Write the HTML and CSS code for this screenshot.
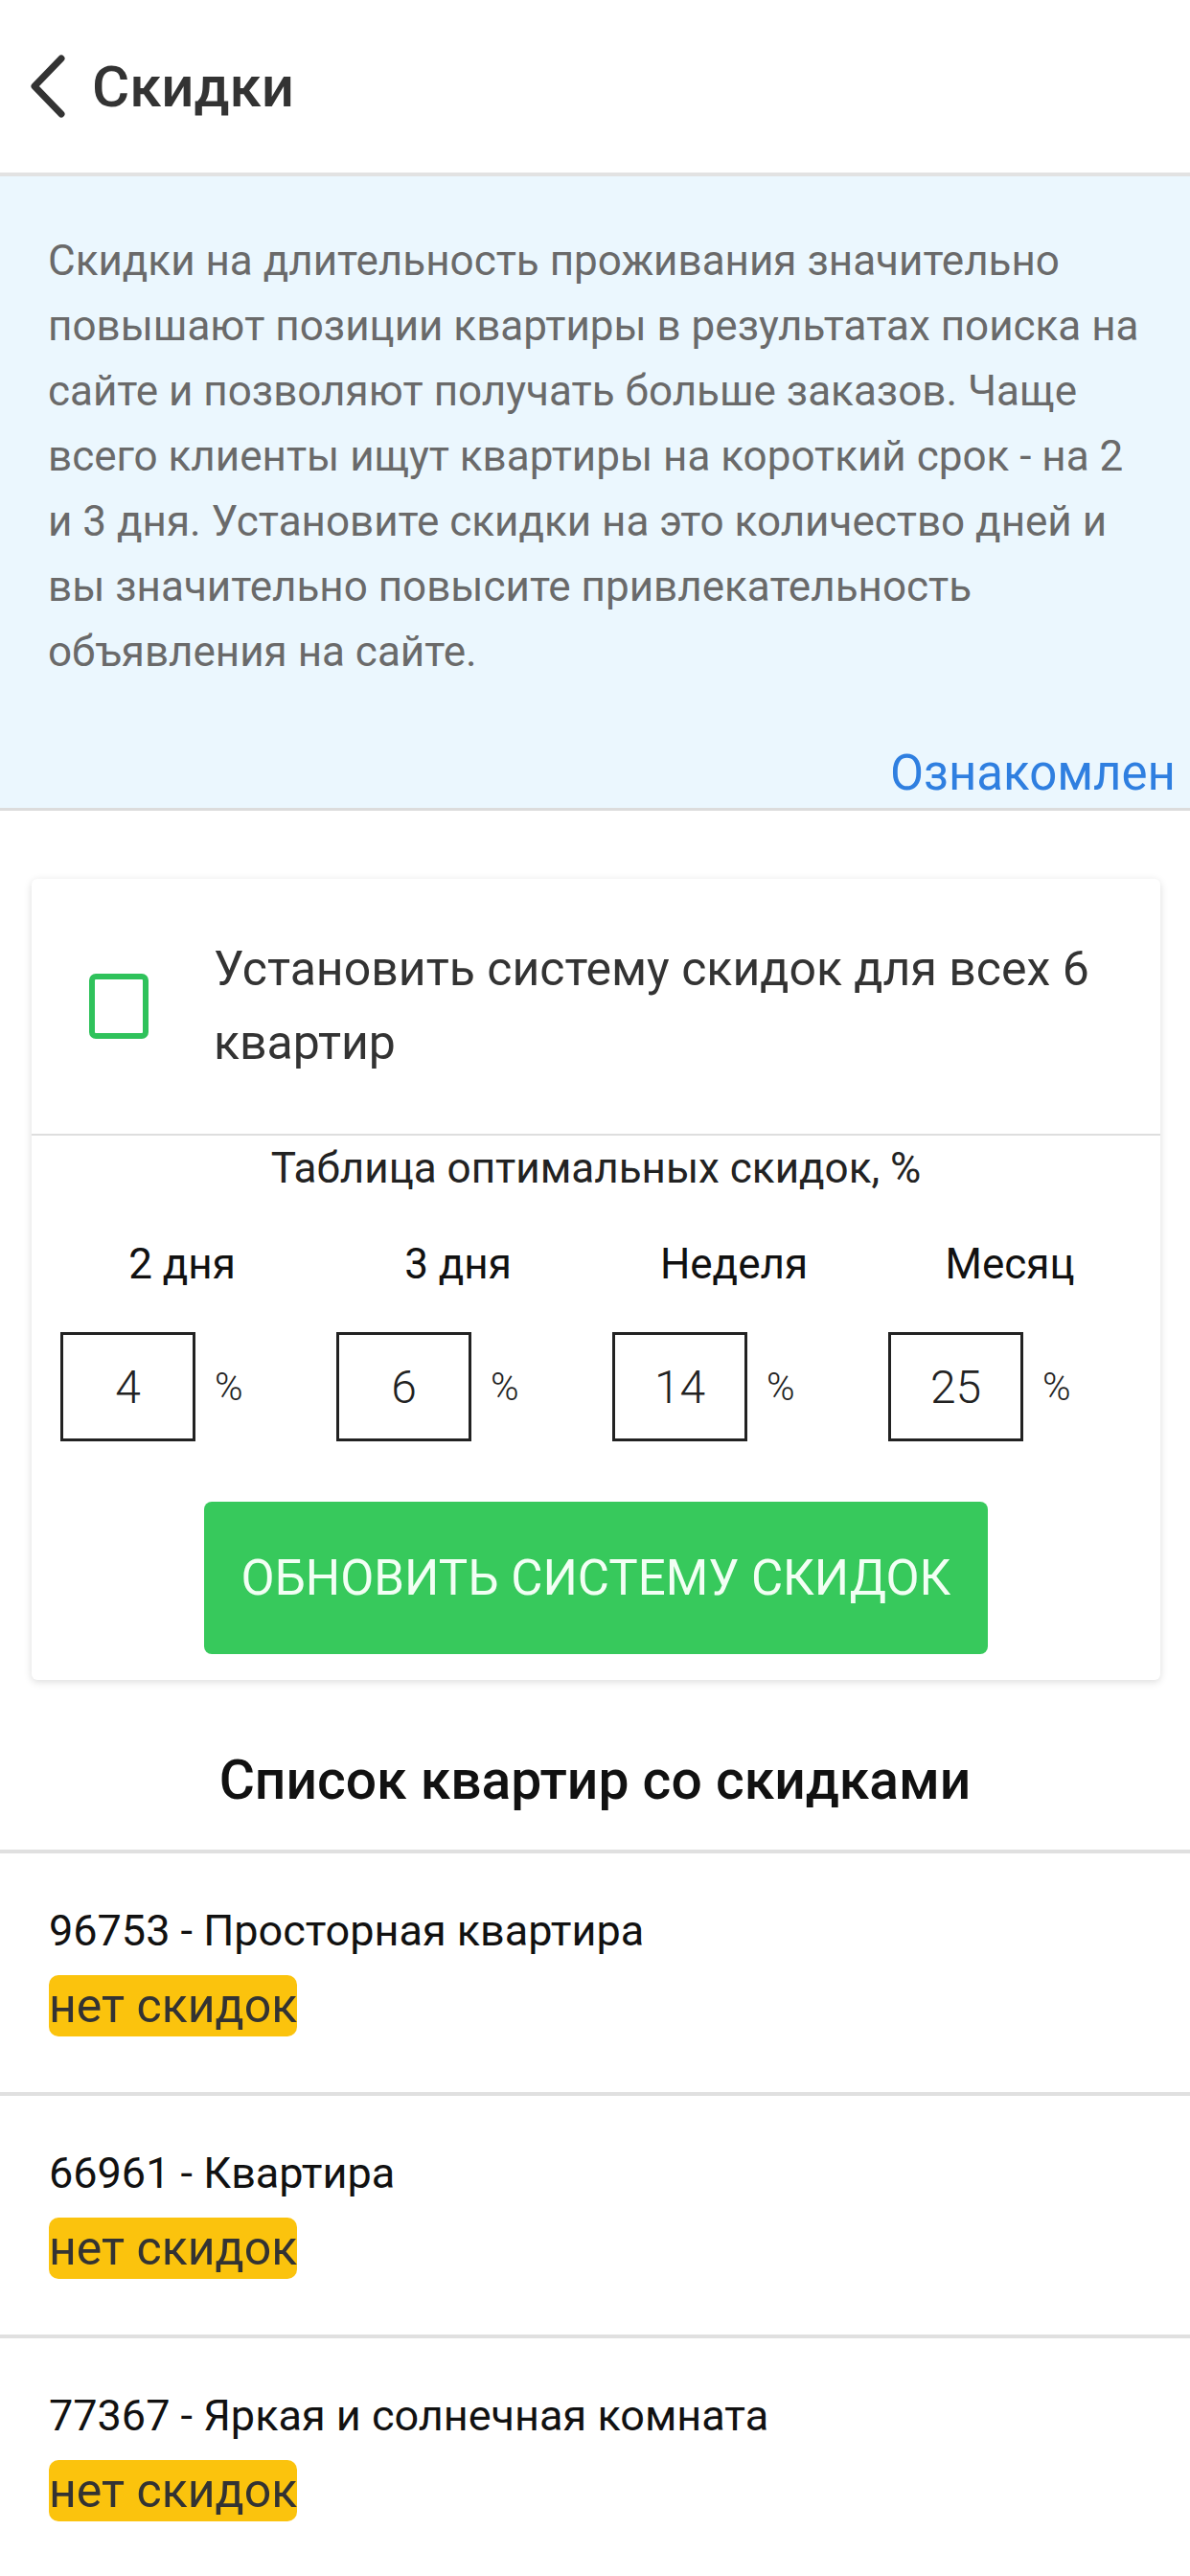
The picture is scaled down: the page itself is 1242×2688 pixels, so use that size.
FILE: index.html
```html
<!DOCTYPE html>
<html lang="ru">
<head>
  <meta charset="UTF-8">
  <meta name="viewport" content="width=device-width, initial-scale=1.0">
  <title>Скидки</title>
  <link rel="stylesheet" href="styles.css">
</head>
<body>
  <!-- Header -->
  <header class="header">
    <button class="back-btn" aria-label="Назад">
      <svg width="40" height="66" viewBox="0 0 40 66">
        <polyline points="34,4 6,33 34,62" fill="none" stroke="#333" stroke-width="7" stroke-linecap="round" stroke-linejoin="round"/>
      </svg>
    </button>
    <h1>Скидки</h1>
  </header>

  <!-- Info -->
  <section class="info">
    <p>Скидки на длительность проживания значительно повышают позиции квартиры в результатах поиска на сайте и позволяют получать больше заказов. Чаще всего клиенты ищут квартиры на короткий срок - на 2 и 3 дня. Установите скидки на это количество дней и вы значительно повысите привлекательность объявления на сайте.</p>
    <a class="info-link" href="#">Ознакомлен</a>
  </section>

  <!-- Discount card -->
  <div class="card">
    <label class="card-check">
      <span class="checkbox"></span>
      <span class="check-label">Установить систему скидок для всех 6 квартир</span>
    </label>

    <div class="card-table">
      <p class="table-title">Таблица оптимальных скидок, %</p>
      <div class="periods" id="periods"></div>
      <button class="update-btn">ОБНОВИТЬ СИСТЕМУ СКИДОК</button>
    </div>
  </div>

  <!-- Flats -->
  <h2 class="list-title">Список квартир со скидками</h2>
  <ul class="flats" id="flats"></ul>

  <script>
    const periods = [
      { label: '2 дня', value: 4 },
      { label: '3 дня', value: 6 },
      { label: 'Неделя', value: 14 },
      { label: 'Месяц', value: 25 }
    ];

    const flats = [
      { id: 96753, title: 'Просторная квартира' },
      { id: 66961, title: 'Квартира' },
      { id: 77367, title: 'Яркая и солнечная комната' }
    ];

    // Rendering discount periods
    const periodsBox = document.getElementById('periods');
    periods.forEach(p => {
      const col = document.createElement('div');
      col.className = 'period';
      col.innerHTML = `<span class="period-label">${p.label}</span>
        <div class="period-input"><span class="value-box">${p.value}</span><span class="percent">%</span></div>`;
      periodsBox.appendChild(col);
    });

    // Rendering flats list
    const flatsList = document.getElementById('flats');
    flats.forEach(f => {
      const li = document.createElement('li');
      li.innerHTML = `<p class="flat-title">${f.id} - ${f.title}</p><span class="badge">нет скидок</span>`;
      flatsList.appendChild(li);
    });
  </script>
</body>
</html>
```

FILE: styles.css
```css
/* General Reset */
* {
  margin: 0;
  padding: 0;
  box-sizing: border-box;
}

body {
  font-family: Roboto, 'Liberation Sans', sans-serif;
  background-color: #ffffff;
  color: #333;
  width: 1242px;
}

/* Header */
.header {
  display: flex;
  align-items: center;
  height: 184px;
  padding-left: 30px;
  border-bottom: 4px solid #e2e2e2;
}

.back-btn {
  background: none;
  border: none;
  display: flex;
  width: 66px;
}

.header h1 {
  font-size: 60px;
  font-weight: 500;
  color: #333;
}

/* Info */
.info {
  background-color: #ebf7fe;
  padding: 54px 15px 6px 50px;
  border-bottom: 3px solid #dcdcdc;
  display: flex;
  flex-direction: column;
}

.info p {
  font-size: 44px;
  line-height: 68px;
  color: #6a6a6a;
  padding-right: 33px;
}

.info-link {
  align-self: flex-end;
  margin-top: 63px;
  font-size: 51px;
  line-height: 60px;
  color: #2f7fe0;
  text-decoration: none;
}

/* Card */
.card {
  margin: 71px 31px 0 33px;
  background-color: #fff;
  border-radius: 6px;
  box-shadow: 0 2px 8px rgba(0, 0, 0, 0.14);
}

.card-check {
  display: flex;
  align-items: center;
  height: 268px;
  padding: 0 30px 0 60px;
  gap: 68px;
  border-bottom: 2px solid #dedede;
}

.checkbox {
  flex: none;
  width: 62px;
  height: 68px;
  border: 6px solid #2fc25b;
  border-radius: 7px;
}

.check-label {
  font-size: 50px;
  line-height: 77px;
  color: #333;
}

.card-table {
  padding: 8px 13px 27px;
  display: flex;
  flex-direction: column;
  align-items: center;
}

.table-title {
  font-size: 44px;
  line-height: 52px;
  color: #222;
}

.periods {
  display: grid;
  grid-template-columns: repeat(4, 288px);
  margin-top: 48px;
}

.period {
  display: flex;
  flex-direction: column;
  align-items: center;
  gap: 45px;
}

.period-label {
  font-size: 44px;
  line-height: 52px;
  color: #111;
}

.period-input {
  align-self: flex-start;
  display: flex;
  align-items: center;
  gap: 20px;
  padding-left: 17px;
}

.value-box {
  width: 141px;
  height: 114px;
  border: 3px solid #222;
  display: flex;
  align-items: center;
  justify-content: center;
  font-size: 48px;
  font-weight: 300;
  color: #222;
}

.percent {
  font-size: 40px;
  font-weight: 300;
  color: #222;
}

.update-btn {
  margin-top: 63px;
  width: 818px;
  height: 159px;
  background-color: #37c95c;
  color: #f2fff4;
  border: none;
  border-radius: 8px;
  font-family: inherit;
  font-size: 51px;
}

/* Flats list */
.list-title {
  margin-top: 70px;
  text-align: center;
  font-size: 57px;
  line-height: 70px;
  font-weight: 500;
  color: #111;
  padding-bottom: 37px;
  border-bottom: 4px solid #e0e0e0;
}

.flats {
  list-style: none;
}

.flats li {
  padding: 53px 51px 58px;
  border-bottom: 4px solid #e0e0e0;
  display: flex;
  flex-direction: column;
  align-items: flex-start;
  gap: 18px;
}

.flats li:last-child {
  border-bottom: none;
}

.flat-title {
  font-size: 45px;
  line-height: 56px;
  color: #111;
}

.badge {
  display: flex;
  align-items: center;
  height: 64px;
  background-color: #fbc30d;
  border-radius: 10px;
  font-size: 50px;
  color: #333;
}
```
